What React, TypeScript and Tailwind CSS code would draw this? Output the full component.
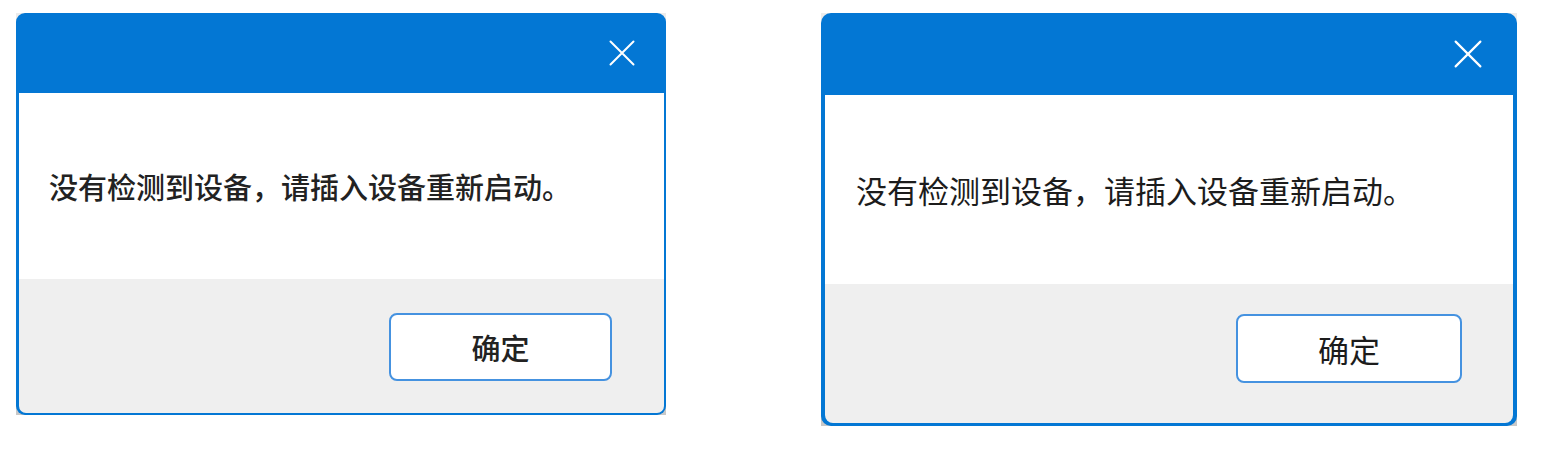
import React from "react";

const font = { fontFamily: '"Noto Sans CJK SC", "Noto Sans", sans-serif' };

function CloseIcon({ size }: { size: number }) {
  return (
    <svg width={size} height={size} viewBox="0 0 26 26" fill="none">
      <path d="M1.5 1.5 L24.5 24.5 M24.5 1.5 L1.5 24.5" stroke="#ffffff" strokeWidth="2" strokeLinecap="round" />
    </svg>
  );
}

export default function App() {
  return (
    <div className="w-[1556px] h-[449px] bg-white flex items-start pl-[16px] pt-[13px] gap-[155px]" style={font}>
      {/* Dialog 1 */}
      <div className="w-[650px] h-[402px] bg-gradient-to-b from-[#ececec] to-[#c8c8c8]">
        <div className="w-full h-full rounded-[9px] bg-[#0377d4] pl-[3px] pr-[2px] pb-[2px] flex flex-col overflow-hidden">
          <div className="h-[80px] flex items-center justify-end pr-[29px] shrink-0">
            <CloseIcon size={26} />
          </div>
          <div className="h-[186px] bg-white flex items-center pl-[30px] shrink-0">
            <span className="text-[29px] leading-[34px] font-medium text-[#222222]">没有检测到设备，请插入设备重新启动。</span>
          </div>
          <div className="flex-1 bg-[#efefef] rounded-b-[7px] flex justify-end items-start pt-[34px] pr-[52px]">
            <div className="w-[223px] h-[68px] bg-white border-2 border-[#4592e0] rounded-[8px] flex items-center justify-center">
              <span className="text-[29px] leading-[34px] font-medium text-[#222222]">确定</span>
            </div>
          </div>
        </div>
      </div>

      {/* Dialog 2 */}
      <div className="w-[696px] h-[413px] bg-gradient-to-b from-[#ececec] to-[#c8c8c8]">
        <div className="w-full h-full rounded-[10px] bg-[#0377d4] pl-[4px] pr-[4px] pb-[3px] flex flex-col overflow-hidden">
          <div className="h-[82px] flex items-center justify-end pr-[31px] shrink-0">
            <CloseIcon size={28} />
          </div>
          <div className="h-[189px] bg-white flex items-center pl-[31px] shrink-0">
            <span className="text-[31px] leading-[36px] text-[#1c1c1c]">没有检测到设备，请插入设备重新启动。</span>
          </div>
          <div className="flex-1 bg-[#efefef] rounded-b-[8px] flex justify-end items-start pt-[30px] pr-[51px]">
            <div className="w-[226px] h-[69px] bg-white border-2 border-[#4592e0] rounded-[8px] flex items-center justify-center">
              <span className="text-[31px] leading-[36px] text-[#1c1c1c]">确定</span>
            </div>
          </div>
        </div>
      </div>
    </div>
  );
}
